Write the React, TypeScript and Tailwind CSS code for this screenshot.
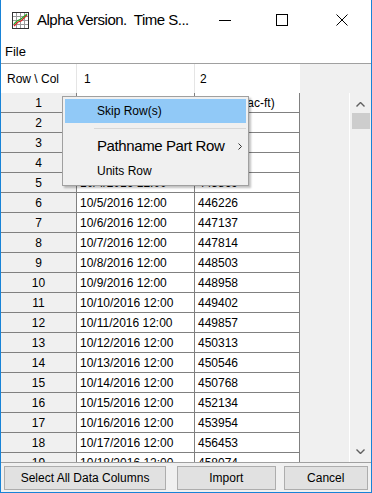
import React from 'react';

const rows: [string, string, string][] = [
  ['1', 'Date / Time', 'Storage (ac-ft)'],
  ['2', '10/1/2016 12:00', '443980'],
  ['3', '10/2/2016 12:00', '444472'],
  ['4', '10/3/2016 12:00', '445104'],
  ['5', '10/4/2016 12:00', '445869'],
  ['6', '10/5/2016 12:00', '446226'],
  ['7', '10/6/2016 12:00', '447137'],
  ['8', '10/7/2016 12:00', '447814'],
  ['9', '10/8/2016 12:00', '448503'],
  ['10', '10/9/2016 12:00', '448958'],
  ['11', '10/10/2016 12:00', '449402'],
  ['12', '10/11/2016 12:00', '449857'],
  ['13', '10/12/2016 12:00', '450313'],
  ['14', '10/13/2016 12:00', '450546'],
  ['15', '10/14/2016 12:00', '450768'],
  ['16', '10/15/2016 12:00', '452134'],
  ['17', '10/16/2016 12:00', '453954'],
  ['18', '10/17/2016 12:00', '456453'],
  ['19', '10/18/2016 12:00', '458074'],
];

const AppIcon = () => (
  <svg width="17" height="17" viewBox="0 0 17 17">
    <rect x="0.5" y="0.5" width="16" height="16" fill="#fff" stroke="#333" />
    {[4, 8, 12].map((v) => (
      <g key={v}>
        <line x1={v + 0.5} y1="1" x2={v + 0.5} y2="16" stroke="#9a9a9a" />
        <line x1="1" y1={v + 0.5} x2="16" y2={v + 0.5} stroke="#9a9a9a" />
      </g>
    ))}
    <polyline points="2,14 6,10 9,9 15,3" fill="none" stroke="#e02020" strokeWidth="1.3" />
    <polyline points="2,12 5,9 9,7 15,2" fill="none" stroke="#2aa82a" strokeWidth="1.3" />
  </svg>
);

export default function App() {
  return (
    <div
      className="w-[372px] h-[493px] bg-white border-x border-b border-[#1883d7] flex flex-col overflow-hidden text-black"
      style={{ fontFamily: '"Liberation Sans", Arial, sans-serif' }}
    >
      {/* title bar */}
      <div className="h-[40px] flex items-center shrink-0">
        <div className="ml-[11px] w-[17px] h-[17px]">
          <AppIcon />
        </div>
        <div className="ml-[8px] text-[15px] tracking-[-0.5px] w-[170px] whitespace-nowrap">Alpha Version.&nbsp; Time S...</div>
        <div className="ml-[12px] w-[12px] h-px bg-black" />
        <div className="ml-[45px] w-[12px] h-[12px] border border-black" />
        <svg className="ml-[48px]" width="12" height="12" viewBox="0 0 12 12">
          <path d="M0.5 0.5 L11.5 11.5 M11.5 0.5 L0.5 11.5" stroke="#000" strokeWidth="1" />
        </svg>
      </div>

      {/* menu bar */}
      <div className="h-[23px] shrink-0 flex items-center pl-[4px] text-[13px]">File</div>

      {/* table panel */}
      <div className="relative flex-1 bg-[#f0f0f0] border-t border-[#a0a0a0] flex overflow-hidden">
        <div className="w-[299px] flex flex-col">
          {/* header */}
          <div className="h-[29px] flex bg-white text-[12px] shrink-0">
            <div className="w-[76px] border-r border-[#e5e5e5] flex items-center pl-[6px]">Row \ Col</div>
            <div className="w-[118px] border-r border-[#e5e5e5] flex items-center pl-[7px]">1</div>
            <div className="w-[105px] flex items-center pl-[5px]">2</div>
          </div>
          {rows.map(([n, d, v]) => (
            <div key={n} className="h-[20px] flex text-[12px] shrink-0">
              <div className="w-[76px] bg-[#f0f0f0] border-r border-b border-[#808080] flex items-center justify-center">{n}</div>
              <div className="w-[118px] bg-white border-r border-b border-[#808080] flex items-center pl-[3px] whitespace-nowrap overflow-hidden">{d}</div>
              <div className="w-[105px] bg-white border-r border-b border-[#808080] flex items-center pl-[3px] whitespace-nowrap overflow-hidden">{v}</div>
            </div>
          ))}
        </div>

        {/* scrollbar */}
        <div className="ml-auto mt-[29px] w-[22px] border-l border-white flex flex-col items-center">
          <svg className="mt-[9px]" width="9" height="5" viewBox="0 0 9 5">
            <path d="M0.5 4.5 L4.5 0.5 L8.5 4.5" fill="none" stroke="#606060" strokeWidth="1.4" />
          </svg>
          <div className="mt-[6px] w-[18px] h-[16px] bg-[#cdcdcd]" />
          <svg className="mt-auto mb-[8px]" width="9" height="5" viewBox="0 0 9 5">
            <path d="M0.5 0.5 L4.5 4.5 L8.5 0.5" fill="none" stroke="#606060" strokeWidth="1.4" />
          </svg>
        </div>

        {/* context menu */}
        <div className="absolute left-[61px] top-[32px] w-[187px] bg-[#f0f0f0] border border-[#a0a0a0] p-[2px] shadow-[2px_2px_2px_rgba(0,0,0,0.25)] text-[12px]">
          <div className="h-[24px] bg-[#91c9f7] flex items-center pl-[32px]">Skip Row(s)</div>
          <div className="h-[11px] flex items-center pl-[29px]">
            <div className="w-full h-px bg-[#d7d7d7]" />
          </div>
          <div className="h-[25px] flex items-center pl-[32px] text-[15px] tracking-[-0.4px]">
            Pathname Part Row
            <svg className="ml-auto mr-[4px]" width="4" height="7" viewBox="0 0 4 7">
              <path d="M0.5 0.5 L3.5 3.5 L0.5 6.5" fill="none" stroke="#333" strokeWidth="1" />
            </svg>
          </div>
          <div className="h-[24px] flex items-center pl-[32px]">Units Row</div>
        </div>
      </div>

      {/* buttons */}
      <div className="h-[30px] shrink-0 bg-[#f0f0f0] border-t border-[#a0a0a0] flex items-center px-[3px] gap-[11px] text-[12px]">
        <button className="w-[163px] h-[24px] bg-[#e1e1e1] border border-[#adadad]">Select All Data Columns</button>
        <button className="w-[99px] h-[24px] bg-[#e1e1e1] border border-[#adadad]">Import</button>
        <button className="ml-[-3px] w-[85px] h-[24px] bg-[#e1e1e1] border border-[#adadad]">Cancel</button>
      </div>
    </div>
  );
}
